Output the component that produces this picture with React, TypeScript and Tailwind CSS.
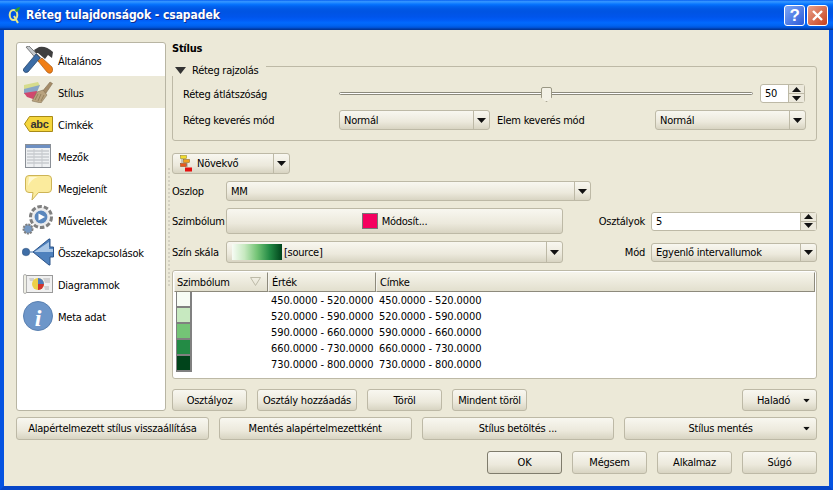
import React from "react";

const btn = "flex items-center justify-center rounded-[3px] border border-[#bdb9a6] bg-[linear-gradient(180deg,#f8f7f0_0%,#ece9dc_60%,#d8d4c2_100%)] text-black";

function Arrow({ className = "" }: { className?: string }) {
  return <svg width="9" height="5" viewBox="0 0 9 5" className={className}><path d="M0 0H9L4.5 5Z" fill="#111" /></svg>;
}
function Btn({ w, children, cls = "" }: { w: string; children: React.ReactNode; cls?: string }) {
  return <div className={`${btn} ${w} ${cls}`}>{children}</div>;
}
function Combo({ w, h, text, children }: { w: string; h: string; text?: string; children?: React.ReactNode }) {
  return (
    <div className={`${btn} ${w} ${h} shrink-0 !justify-start`}>
      <div className="flex min-w-0 flex-1 items-center pl-1">{children ?? text}</div>
      <div className="flex h-full w-[16px] items-center justify-center border-l border-[#bdb9a6]"><Arrow /></div>
    </div>
  );
}
function Spin({ w, value }: { w: string; value: string }) {
  return (
    <div className={`flex h-[19px] shrink-0 ${w} rounded-[3px] border border-[#bdb9a6] bg-white`}>
      <div className="flex flex-1 items-center pl-1">{value}</div>
      <div className="flex w-[16px] flex-col border-l border-[#bdb9a6] bg-[#ece9dc]">
        <div className="flex flex-1 items-center justify-center border-b border-[#bdb9a6]"><svg width="9" height="5" viewBox="0 0 9 5"><path d="M0 5H9L4.5 0Z" fill="#111" /></svg></div>
        <div className="flex flex-1 items-center justify-center"><Arrow /></div>
      </div>
    </div>
  );
}

const Hammer = () => (
  <svg width="30" height="28" viewBox="0 0 30 28">
    <path d="M3 1 6 0 19 13 16 16Z" fill="#c4c8cc" stroke="#555" strokeWidth=".7" />
    <path d="M.5 23 13 8l4 4L5 26Q2 27.500 .5 25Z" fill="#3c6da6" stroke="#1d3a60" strokeWidth=".7" />
    <path d="M11 4 16 1Q23-.5 30 6L29 12 25 9 22 13 15 7 13 7Z" fill="#3f3f3f" />
    <path d="M15 15 19 12 29 21Q31 25 28 27 26 28 24 26Z" fill="#f07f17" stroke="#99500f" strokeWidth=".6" />
  </svg>
);
const Brush = () => (
  <svg width="30" height="22" viewBox="0 0 30 22">
    <path d="M1 4 15 1l2 4L1 9Z" fill="#d6dc8c" />
    <path d="M1 8 17 4l-3 7-13 2Z" fill="#88a6c6" />
    <path d="M1 12 14 10l-1 9-9-3Z" fill="#d0486e" />
    <path d="M18 12 27 1l2.500 1.500L21 15Z" fill="#a58c68" stroke="#78664a" strokeWidth=".5" />
    <path d="M14 11 20 9l4 5-6 8-9-2Z" fill="#b8a27e" stroke="#7c6a4e" strokeWidth=".5" />
    <path d="M15 13 12 19M18 13 15 20M21 14 18 20" stroke="#8c7856" strokeWidth=".8" />
  </svg>
);
const Abc = () => (
  <svg width="29" height="16" viewBox="0 0 29 16">
    <path d="M5.500.5H28.500V15.500H5.500L.5 8Z" fill="#f5d63d" stroke="#a88a17" />
    <text x="6.500" y="12" fontFamily="Liberation Sans" fontWeight="700" fontSize="11" fill="#333">abc</text>
  </svg>
);
const TableIcon = () => (
  <svg width="26" height="24" viewBox="0 0 26 24">
    <rect x=".5" y=".5" width="25" height="23" fill="#eef0f2" stroke="#8a8f96" />
    <rect x="1" y="1" width="24" height="3" fill="#6d8fc2" />
    {[7, 10, 13, 16, 19].map((y) => <path key={y} d={`M2 ${y}H24`} stroke="#b4b8bd" strokeWidth="1" />)}
    <path d="M9 5V23M17 5V23" stroke="#c6c9cd" />
  </svg>
);
const Bubble = () => (
  <svg width="27" height="26" viewBox="0 0 27 26">
    <path d="M4 .5H23Q26.500 .5 26.500 4V14Q26.500 17.500 23 17.500H13.500L7 25 8 17.500H4Q.5 17.500 .5 14V4Q.5 .5 4 .5Z" fill="#fbeb9d" stroke="#cdb456" />
    <path d="M4 2H13Q6 4 3 11Z" fill="#fff8d2" />
  </svg>
);
const Gears = () => (
  <svg width="32" height="32" viewBox="0 0 32 32">
    <circle cx="19" cy="13" r="10.500" fill="#eee" stroke="#808080" strokeWidth="3" strokeDasharray="4.500 2" />
    <circle cx="19" cy="13" r="7" fill="#5a87bd" stroke="#e9ebee" strokeWidth="1.200" />
    <path d="M16.500 9.500 23 13l-6.500 3.500Z" fill="#fff" />
    <circle cx="6" cy="25" r="4.500" fill="#7699c3" stroke="#808080" strokeWidth="2" strokeDasharray="2 1" />
  </svg>
);
const Link = () => (
  <svg width="33" height="28" viewBox="0 0 33 28">
    <circle cx="4" cy="14" r="3.800" fill="#3f6ea6" stroke="#2a4d78" strokeWidth=".5" />
    <path d="M8 14H11" stroke="#3f6ea6" />
    <path d="M11 14 27 1h1v8h3.500v10H28v8h-1Z" fill="#4f81bd" stroke="#2d5489" />
    <path d="M12 14 27 4v7h4v3Z" fill="#a9c6e6" />
  </svg>
);
const Diagram = () => (
  <svg width="30" height="20" viewBox="0 0 30 20">
    <rect x="2.500" y="1.500" width="27" height="17" fill="#f0f0f0" stroke="#9a9a9a" />
    <rect x=".5" y=".5" width="3" height="19" rx="1.500" fill="#eeeee4" stroke="#9a9a9a" strokeWidth=".7" />
    <path d="M6 4h5v3H7ZM20 4h7v5h-5ZM21 12h5v4h-4Z" fill="#d0d0d0" />
    <circle cx="15" cy="10" r="6" fill="#ecd048" />
    <path d="M15 10V4A6 6 0 0 1 21 10Z" fill="#4e79b8" />
    <path d="M15 10H21A6 6 0 0 1 15 16Z" fill="#d0332f" />
  </svg>
);
const Info = () => (
  <svg width="30" height="30" viewBox="0 0 30 30">
    <circle cx="15" cy="15" r="14.500" fill="#6d96c9" stroke="#5a80b0" />
    <text x="15" y="25" textAnchor="middle" fontFamily="Liberation Serif" fontStyle="italic" fontWeight="700" fontSize="24" fill="#fff">i</text>
  </svg>
);
const Graduated = () => (
  <svg width="13" height="17" viewBox="0 0 13 17">
    <rect x=".5" y=".5" width="6" height="3" fill="#f2dc2c" stroke="#8a7a20" strokeWidth=".5" />
    <rect x="3.500" y="4.500" width="6" height="3" fill="#f2a01e" stroke="#8a5a10" strokeWidth=".5" />
    <rect x=".5" y="8.500" width="6" height="3" fill="#e8561c" stroke="#8a3a10" strokeWidth=".5" />
    <rect x="5" y="12.500" width="7" height="4" fill="#e50f0f" />
    <path d="M2 4V8M7 8V12" stroke="#777" strokeWidth=".7" />
  </svg>
);
const QLogo = () => (
  <svg width="13" height="17" viewBox="0 0 13 17">
    <ellipse cx="5.500" cy="8" rx="3.800" ry="5" fill="none" stroke="#e8e88a" strokeWidth="2" />
    <path d="M6 9l4 7" stroke="#e8e88a" strokeWidth="2" />
    <path d="M7 3Q9 0 12 0 12 3 8 5Z" fill="#2f9e2f" />
  </svg>
);

const nav: [string, React.ReactNode][] = [
  ["Általános", <Hammer />], ["Stílus", <Brush />], ["Cimkék", <Abc />], ["Mezők", <TableIcon />],
  ["Megjelenít", <Bubble />], ["Műveletek", <Gears />], ["Összekapcsolások", <Link />], ["Diagrammok", <Diagram />], ["Meta adat", <Info />],
];
const rows: [string, string][] = [
  ["#f7fcf5", "450.0000 - 520.0000"], ["#c7e9c0", "520.0000 - 590.0000"], ["#74c476", "590.0000 - 660.0000"],
  ["#238b45", "660.0000 - 730.0000"], ["#00441b", "730.0000 - 800.0000"],
];
const th = "flex items-center border border-[#8d8a7c] border-t-[#f5f4ee] border-l-[#f5f4ee] bg-[linear-gradient(180deg,#f6f4ea,#e2dfce)]";

export default function App() {
  return (
    <div className="flex h-[490px] w-[833px] flex-col overflow-hidden bg-[#0553e1] font-['DejaVu_Sans_Condensed','DejaVu_Sans',sans-serif] text-[11px] leading-none tracking-[-0.25px] text-black">
      <div className="flex h-[30px] shrink-0 items-center bg-[linear-gradient(180deg,#0058ee_0%,#3593ff_4%,#288eff_8%,#127dff_12%,#036ffc_16%,#0262ee_22%,#0057e5_30%,#0054e3_40%,#0055eb_56%,#005bf5_66%,#026afe_76%,#0062ef_86%,#0052d6_92%,#0040ab_96%,#003092_100%)] pl-[8px] pr-[5px]">
        <QLogo />
        <div className="ml-[5px] flex-1 text-[12px] font-bold tracking-[-0.05px] text-white [text-shadow:1px_1px_0_#0f2f8f]">Réteg tulajdonságok - csapadek</div>
        <div className="flex h-[21px] w-[21px] items-center justify-center rounded-[3px] border border-white bg-[linear-gradient(135deg,#7ea6f5,#2a5ad8)] font-['Liberation_Sans',sans-serif] text-[17px] font-bold text-white">?</div>
        <div className="ml-[2px] flex h-[21px] w-[21px] items-center justify-center rounded-[3px] border border-white bg-[linear-gradient(135deg,#e8a08a,#c8401c)]">
          <svg width="13" height="13" viewBox="0 0 13 13"><path d="M2 2 11 11M11 2 2 11" stroke="#fff" strokeWidth="2.400" /></svg>
        </div>
      </div>
      <div className="flex min-h-0 flex-1 flex-col border-x-[4px] border-b-[4px] border-x-[#0553e1] border-b-[#0646c8] bg-[#ece9d8] px-[12px] pt-[12px]">
        <div className="flex h-[369px] shrink-0">
          <div className="flex w-[150px] shrink-0 flex-col rounded-[3px] border border-[#b8b5a3] bg-white pt-[1px]">
            {nav.map(([label, icon], i) => (
              <div key={label} className={`flex h-[32px] items-center ${i === 1 ? "bg-[#ece9d8]" : ""}`}>
                <div className="flex w-[41px] shrink-0 items-center justify-center pl-[1px]">{icon}</div>
                <span className="pt-[2px]">{label}</span>
              </div>
            ))}
          </div>
          <div className="flex w-[6px] shrink-0 flex-col items-center justify-center gap-[2px]">
            {Array.from({ length: 30 }).map((_, i) => <div key={i} className="h-[2px] w-[2px] bg-[#d4d1c2]" />)}
          </div>
          <div className="flex min-w-0 flex-1 flex-col">
            <div className="h-[15px] font-bold leading-[14px]">Stílus</div>
            <div className="relative mt-[9px] h-[75px] rounded-[3px] border border-[#bdb9a6] px-[10px] pt-[17px]">
              <div className="absolute -left-[1px] -top-[3px] flex h-[12px] items-center gap-[6px] bg-[#ece9d8] pl-[3px] pr-[8px]">
                <svg width="11" height="7" viewBox="0 0 11 7"><path d="M0 0H11L5.500 7Z" fill="#333" /></svg>
                <span>Réteg rajzolás</span>
              </div>
              <div className="flex h-[19px] items-center">
                <span className="w-[156px] shrink-0 pt-[2px]">Réteg átlátszóság</span>
                <div className="relative h-[3px] w-[414px] shrink-0 rounded-full border border-[#8c8a7c] bg-white">
                  <div className="absolute -top-[6px] left-[201px] h-[15px] w-[11px] rounded-t-[2px] border border-[#9a9784] bg-[#f3f1e6] [clip-path:polygon(0_0,100%_0,100%_70%,50%_100%,0_70%)]" />
                </div>
                <div className="ml-[7px]"><Spin w="w-[45px]" value="50" /></div>
              </div>
              <div className="mt-[7px] flex h-[20px] items-center">
                <span className="w-[156px] shrink-0">Réteg keverés mód</span>
                <Combo w="w-[151px]" h="h-[20px]" text="Normál" />
                <span className="ml-[7px] w-[158px] shrink-0">Elem keverés mód</span>
                <Combo w="w-[151px]" h="h-[20px]" text="Normál" />
              </div>
            </div>
            <div className={`${btn} mt-[12px] h-[21px] w-[118px] !justify-start`}>
              <div className="flex flex-1 items-center gap-[4px] pl-[7px]"><Graduated /><span>Növekvő</span></div>
              <div className="flex h-full w-[16px] items-center justify-center border-l border-[#bdb9a6]"><Arrow /></div>
            </div>
            <div className="mt-[7px] flex h-[20px] items-center">
              <span className="w-[54px] shrink-0">Oszlop</span>
              <Combo w="w-[365px]" h="h-[20px]" text="MM" />
            </div>
            <div className="mt-[7px] flex h-[26px] items-center">
              <span className="w-[54px] shrink-0">Szimbólum</span>
              <Btn w="w-[337px] shrink-0" cls="h-[26px] gap-[4px]">
                <span className="h-[16px] w-[16px] border border-[#777] bg-[#f5005f]" />
                <span>Módosít...</span>
              </Btn>
              <span className="w-[82px] shrink-0 text-right">Osztályok</span>
              <div className="ml-[6px]"><Spin w="w-[166px]" value="5" /></div>
            </div>
            <div className="mt-[7px] flex h-[22px] items-center">
              <span className="w-[54px] shrink-0">Szín skála</span>
              <Combo w="w-[337px]" h="h-[22px]">
                <div className="ml-[1px] h-[16px] w-[50px] bg-[linear-gradient(90deg,#f7fcf5,#c7e9c0_25%,#74c476_50%,#238b45_75%,#00441b)]" />
                <span className="ml-[2px]">[source]</span>
              </Combo>
              <span className="w-[82px] shrink-0 text-right">Mód</span>
              <div className="ml-[6px]"><Combo w="w-[166px]" h="h-[19px]" text="Egyenlő intervallumok" /></div>
            </div>
            <div className="mt-[7px] h-[109px] rounded-[3px] border border-[#bdb9a6] bg-white p-[1px]">
              <div className="grid h-[20px] grid-cols-[94px_108px_1fr]">
                <div className={`${th} relative pl-[2px]`}>Szimbólum
                  <svg className="absolute right-[6px] top-[4px]" width="11" height="9" viewBox="0 0 11 9"><path d="M.5.500H10.500L5.500 8.500Z" fill="none" stroke="#bdbaa8" /></svg>
                </div>
                <div className={`${th} pl-[3px]`}>Érték</div>
                <div className={`${th} pl-[3px]`}>Címke</div>
              </div>
              {rows.map(([c, t]) => (
                <div key={t} className="grid h-[16px] grid-cols-[94px_108px_1fr] items-center tracking-[-0.1px]">
                  <div className="pl-[2px]"><div className="h-[16px] w-[16px] border-b-2 border-l border-r-2 border-[#808080]" style={{ backgroundColor: c }} /></div>
                  <div className="pl-[3px]">{t}</div>
                  <div className="pl-[3px]">{t}</div>
                </div>
              ))}
            </div>
            <div className="mt-[10px] flex h-[22px] gap-[10px]">
              <Btn w="w-[75px]">Osztályoz</Btn>
              <Btn w="w-[100px]">Osztály hozzáadás</Btn>
              <Btn w="w-[75px]">Töröl</Btn>
              <Btn w="w-[75px]">Mindent töröl</Btn>
              <Btn w="w-[75px]" cls="relative ml-auto pr-[12px]">Haladó<Arrow className="absolute right-[5px] top-[8px] scale-75" /></Btn>
            </div>
          </div>
        </div>
        <div className="mt-[6px] grid h-[23px] shrink-0 grid-cols-4 gap-[10px]">
          <Btn w="">Alapértelmezett stílus visszaállítása</Btn>
          <Btn w="">Mentés alapértelmezettként</Btn>
          <Btn w="">Stílus betöltés ...</Btn>
          <Btn w="" cls="relative">Stílus mentés<Arrow className="absolute right-[5px] top-[8px] scale-75" /></Btn>
        </div>
        <div className="mt-[11px] flex h-[23px] shrink-0 justify-end gap-[10px]">
          <Btn w="w-[75px]" cls="!border-[#7f7c6c]">OK</Btn>
          <Btn w="w-[75px]">Mégsem</Btn>
          <Btn w="w-[75px]">Alkalmaz</Btn>
          <Btn w="w-[75px]">Súgó</Btn>
        </div>
      </div>
    </div>
  );
}
